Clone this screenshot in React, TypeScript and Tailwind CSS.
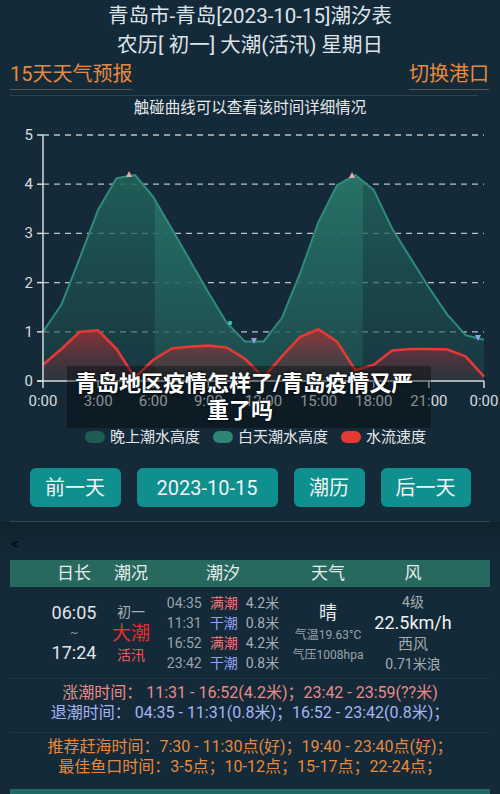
import React from "react";

// hourly values, 0:00 .. 24:00
const tide = [
  1.0, 1.55, 2.5, 3.48, 4.12, 4.19, 3.74, 3.1, 2.45, 1.8, 1.18, 0.8, 0.8, 1.28,
  2.2, 3.24, 3.98, 4.19, 3.88, 3.1, 2.5, 1.9, 1.35, 0.93, 0.84,
];
const flow = [
  0.33, 0.65, 1.0, 1.03, 0.65, 0.07, 0.43, 0.66, 0.7, 0.72, 0.68, 0.45, 0.07,
  0.5, 0.9, 1.05, 0.8, 0.22, 0.33, 0.62, 0.65, 0.65, 0.64, 0.5, 0.09,
];

const px = (h: number) => 43 + h * 18.375;
const py = (v: number) => 261 - v * 49.2;

function linePath(data: number[]) {
  return data
    .map((v, i) => `${i ? "L" : "M"}${px(i).toFixed(1)},${py(v).toFixed(1)}`)
    .join(" ");
}

function areaPath(data: number[]) {
  return `${linePath(data)} L${px(24)},261 L${px(0)},261 Z`;
}

function TideChart() {
  const xLabels = ["0:00", "3:00", "6:00", "9:00", "12:00", "15:00", "18:00", "21:00", "0:00"];
  return (
    <svg width="500" height="292" viewBox="0 0 500 292" className="block">
      <defs>
        <linearGradient id="night" x1="0" y1="40" x2="0" y2="261" gradientUnits="userSpaceOnUse">
          <stop offset="0" stopColor="#22675d" stopOpacity="0.9" />
          <stop offset="1" stopColor="#1c4a4b" stopOpacity="0.45" />
        </linearGradient>
        <linearGradient id="day" x1="0" y1="40" x2="0" y2="261" gradientUnits="userSpaceOnUse">
          <stop offset="0" stopColor="#28766a" stopOpacity="0.92" />
          <stop offset="1" stopColor="#215a56" stopOpacity="0.5" />
        </linearGradient>
        <linearGradient id="flow" x1="0" y1="205" x2="0" y2="261" gradientUnits="userSpaceOnUse">
          <stop offset="0" stopColor="#cc2a2f" stopOpacity="0.7" />
          <stop offset="1" stopColor="#6a2a36" stopOpacity="0.25" />
        </linearGradient>
        <clipPath id="dayClip">
          <rect x="154.8" y="0" width="208" height="262" />
        </clipPath>
      </defs>

      {[1, 2, 3, 4, 5].map((v) => (
        <line
          key={v}
          x1="43"
          x2="484"
          y1={py(v)}
          y2={py(v)}
          stroke="#d9dde0"
          strokeWidth="1.3"
          strokeDasharray="6 5"
          opacity="0.85"
        />
      ))}

      <path d={areaPath(tide)} fill="url(#night)" />
      <path d={areaPath(tide)} fill="url(#day)" clipPath="url(#dayClip)" />
      <path d={linePath(tide)} fill="none" stroke="#2f8c7c" strokeWidth="2" strokeLinejoin="round" />

      <path d={areaPath(flow)} fill="url(#flow)" />
      <path d={linePath(flow)} fill="none" stroke="#e53935" strokeWidth="2.6" strokeLinejoin="round" />

      {/* high / low tide markers */}
      <polygon points="126,57 132,57 129,51" fill="#f0a8a2" />
      <polygon points="349,58 355,58 352,52" fill="#f0a8a2" />
      <polygon points="251,218 257,218 254,224" fill="#8fa3ee" />
      <polygon points="475,215 481,215 478,221" fill="#8fa3ee" />
      <circle cx="230" cy="203" r="2.2" fill="#45b8a6" />

      {/* axes */}
      <line x1="43" x2="43" y1="15" y2="261" stroke="#d6dadd" strokeWidth="1.5" />
      <line x1="37" x2="484" y1="261" y2="261" stroke="#d6dadd" strokeWidth="1.5" />
      {[0, 1, 2, 3, 4, 5].map((v) => (
        <g key={v}>
          <line x1="37" x2="43" y1={py(v)} y2={py(v)} stroke="#d6dadd" strokeWidth="1.5" />
          <text
            x="33"
            y={py(v)}
            textAnchor="end"
            dominantBaseline="central"
            fontSize="15"
            fill="#d8dcdf"
            fontFamily="Roboto, sans-serif"
          >
            {v}
          </text>
        </g>
      ))}
      {xLabels.map((l, i) => (
        <g key={i}>
          <line x1={px(i * 3)} x2={px(i * 3)} y1="261" y2="268" stroke="#d6dadd" strokeWidth="1.5" />
          <text
            x={px(i * 3)}
            y="281"
            textAnchor="middle"
            dominantBaseline="central"
            fontSize="15"
            fill="#d8dcdf"
            fontFamily="Roboto, sans-serif"
          >
            {l}
          </text>
        </g>
      ))}
    </svg>
  );
}

function LegendItem({ color, label }: { color: string; label: string }) {
  return (
    <div className="flex items-center gap-[5px]">
      <span className={`block w-[20px] h-[12px] rounded-full ${color}`} />
      <span>{label}</span>
    </div>
  );
}

const tides = [
  { time: "04:35", kind: "满潮", h: "4.2米", high: true },
  { time: "11:31", kind: "干潮", h: "0.8米", high: false },
  { time: "16:52", kind: "满潮", h: "4.2米", high: true },
  { time: "23:42", kind: "干潮", h: "0.8米", high: false },
];

export default function App() {
  return (
    <div className="w-[500px] h-[794px] overflow-hidden bg-[#142a39] text-[#e3e8eb] font-['Roboto','Noto_Sans_CJK_SC',sans-serif]">
      <div className="pt-[2px] text-center text-[20.5px] leading-[29px] text-[#dde3e8]">
        <div>青岛市-青岛[2023-10-15]潮汐表</div>
        <div>农历[ 初一] 大潮(活汛) 星期日</div>
      </div>

      <div className="flex justify-between pl-[10px] pr-[11px] text-[20px] leading-[29px] text-[#e8893a]">
        <span className="border-b border-[#5a5752]">15天天气预报</span>
        <span className="border-b border-[#5a5752]">切换港口</span>
      </div>
      <div className="mt-[5px] ml-[10px] w-[468px] h-px bg-[#2a4251]" />

      <div className="text-center text-[15.5px] leading-[24px] text-[#e6e9eb]">
        触碰曲线可以查看该时间详细情况
      </div>

      <div className="relative h-[292px]">
        <TideChart />
        <div className="absolute left-[67px] top-[246px] w-[364px] h-[62px] bg-black/35 pt-[4px] pl-[8px] pr-[26px] text-center text-white font-bold text-[22px] leading-[27px] [text-shadow:0_0_3px_#000]">
          <div className="whitespace-nowrap">青岛地区疫情怎样了/青岛疫情又严</div>
          <div>重了吗</div>
        </div>
      </div>

      <div className="mt-[13px] h-[24px] flex items-center justify-center gap-[13px] pl-[11px] text-[15px] text-[#e4e7ea]">
        <LegendItem color="bg-[#1f5b53]" label="晚上潮水高度" />
        <LegendItem color="bg-[#2e8575]" label="白天潮水高度" />
        <LegendItem color="bg-[#e53935]" label="水流速度" />
      </div>

      <div className="mt-[19px] flex justify-center gap-[16px] text-[20px] text-[#eef4f4]">
        <button className="w-[91px] h-[39px] rounded-[6px] bg-[#0f8f8d]">前一天</button>
        <button className="w-[141px] h-[39px] rounded-[6px] bg-[#0f8f8d]">2023-10-15</button>
        <button className="w-[71px] h-[39px] rounded-[6px] bg-[#0f8f8d]">潮历</button>
        <button className="w-[90px] h-[39px] rounded-[6px] bg-[#0f8f8d]">后一天</button>
      </div>

      <div className="mt-[14px] mx-[10px] h-px bg-[#34464f]" />

      <div className="h-[38px] pt-[6px] pl-[11px] leading-[32px] text-[15px] text-black bg-gradient-to-b from-[#10212c] to-[#142a39]">
        &lt;
      </div>

      <div className="mx-[10px] h-[27px] bg-[#27695f] grid grid-cols-[72px_42px_142px_68px_102px] pl-[28px] text-[17px] text-[#e6ecee] items-center">
        <div className="flex justify-center">日长</div>
        <div className="flex justify-center">潮况</div>
        <div className="flex justify-center">潮汐</div>
        <div className="flex justify-center">天气</div>
        <div className="flex justify-center">风</div>
      </div>

      <div className="mx-[10px] h-[91px] grid grid-cols-[72px_42px_142px_68px_102px] pl-[28px]">
        <div className="flex flex-col items-center justify-center text-[#e1e5e8]">
          <div className="text-[18px] leading-[22px]">06:05</div>
          <div className="text-[12px] leading-[18px] text-[#8a9399]">~</div>
          <div className="text-[18px] leading-[22px]">17:24</div>
        </div>
        <div className="flex flex-col items-center justify-center whitespace-nowrap">
          <div className="text-[14px] leading-[22px] text-[#a9b0b4]">初一</div>
          <div className="text-[19px] leading-[22px] text-[#e42d2d]">大潮</div>
          <div className="text-[14px] leading-[20px] text-[#ee5a5a]">活汛</div>
        </div>
        <div className="flex flex-col items-center justify-center text-[14px] leading-[20px]">
          {tides.map((t) => (
            <div key={t.time} className="flex gap-[8px] whitespace-nowrap">
              <span className="text-[#9aa3a8]">{t.time}</span>
              <span className={t.high ? "text-[#f07474]" : "text-[#93a4f2]"}>{t.kind}</span>
              <span className="text-[#a8aeb1]">{t.h}</span>
            </div>
          ))}
        </div>
        <div className="flex flex-col items-center justify-center whitespace-nowrap">
          <div className="text-[18px] leading-[24px] text-[#e6eaec]">晴</div>
          <div className="text-[12px] leading-[20px] text-[#9aa3a8]">气温19.63°C</div>
          <div className="text-[12px] leading-[20px] text-[#9aa3a8]">气压1008hpa</div>
        </div>
        <div className="flex flex-col items-center justify-center whitespace-nowrap">
          <div className="text-[14px] leading-[20px] text-[#a3aaae]">4级</div>
          <div className="text-[18px] leading-[22px] text-[#eef1f3]">22.5km/h</div>
          <div className="text-[15px] leading-[20px] text-[#a3aaae]">西风</div>
          <div className="text-[14px] leading-[20px] text-[#a3aaae]">0.71米浪</div>
        </div>
      </div>

      <div className="mx-[10px] h-px bg-[#1e3646]" />

      <div className="pt-[4px] text-center text-[16px] leading-[20px] whitespace-nowrap">
        <div className="text-[#e98a8a]">涨潮时间： 11:31 - 16:52(4.2米)；23:42 - 23:59(??米)</div>
        <div className="text-[#a7b3f2]">退潮时间： 04:35 - 11:31(0.8米)；16:52 - 23:42(0.8米)；</div>
      </div>

      <div className="mt-[9px] mx-[10px] h-px bg-[#1e3646]" />

      <div className="pt-[4px] text-center text-[16px] leading-[20px] whitespace-nowrap text-[#e6893c]">
        <div>推荐赶海时间：7:30 - 11:30点(好)；19:40 - 23:40点(好)；</div>
        <div>最佳鱼口时间：3-5点；10-12点；15-17点；22-24点；</div>
      </div>

      <div className="mt-[12px] mx-[10px] h-[5px] bg-[#1f6a62]" />
    </div>
  );
}
